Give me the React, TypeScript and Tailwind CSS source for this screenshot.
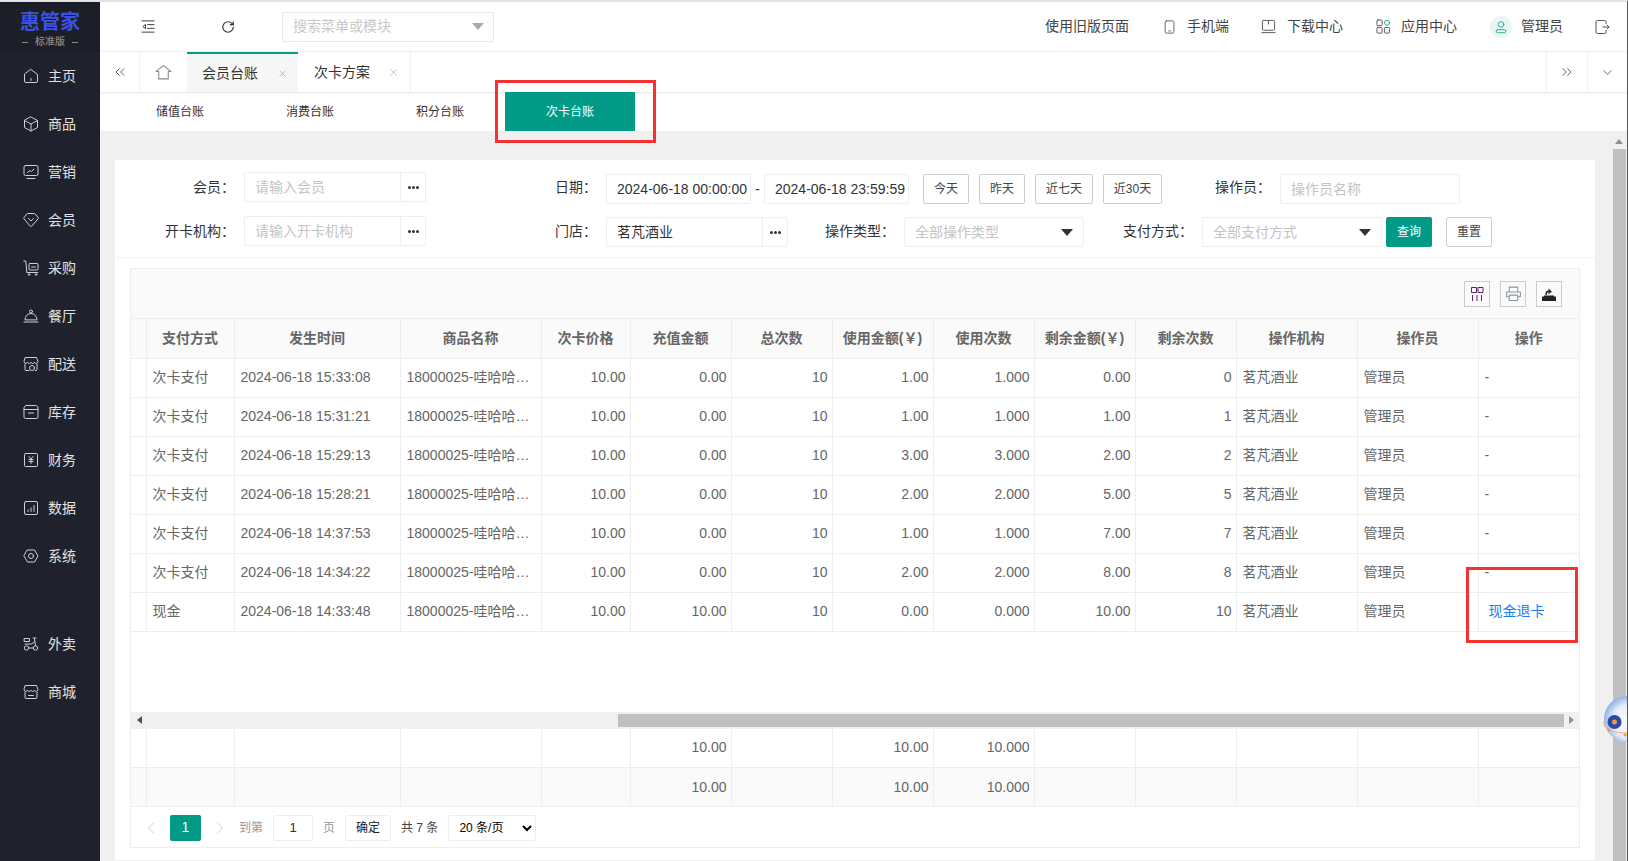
import React from "react";
import { ChevronsLeft, ChevronsRight, ChevronDown, ChevronLeft, ChevronRight, RotateCw, X } from "lucide-react";

const Ico = ({ children, size = 16, className = "" }: { children: React.ReactNode; size?: number; className?: string }) => (
  <svg width={size} height={size} viewBox="0 0 16 16" fill="none" stroke="currentColor" strokeWidth="1" strokeLinecap="round" strokeLinejoin="round" className={"shrink-0 " + className}>
    {children}
  </svg>
);

const storeTop = "M2.5 1.5h11L15 5.5c0 2-3 2.5-3.5.7C11 8 8.500 8 8 6.200 7.500 8 5 8 4.500 6.200 4 8 1 7.500 1 5.500z";

const navTop: [string, React.ReactNode][] = [
  ["主页", <path d="M8 1.500l6.500 5V13a1.500 1.500 0 0 1-1.500 1.500H3A1.500 1.500 0 0 1 1.500 13V6.500zM8 10.500v2" />],
  ["商品", <path d="M8 1l6.500 3.500v7L8 15l-6.500-3.500v-7zM1.500 4.500L8 8l6.500-3.500M8 8v7" />],
  ["营销", <><rect x="1" y="1.500" width="14" height="10" rx="1.500" /><path d="M4.500 8.500L7 6.500l1.500 1L11 5M4 14.500h8" /></>],
  ["会员", <path d="M5 1.500h6c.5 0 1 .2 1.300.6L15 5.500c.3.400.3.900 0 1.300l-6.200 7.300c-.4.500-1.200.5-1.600 0L1 6.800c-.3-.4-.3-.9 0-1.300l2.700-3.400c.3-.4.8-.6 1.300-.6zM5.500 6.500L8 9l2.500-2.500" />],
  ["采购", <><path d="M.8 1h2l1 11.500h11" /><rect x="6" y="3.500" width="9" height="6.500" rx="1" /><path d="M8.500 7h4" /><circle cx="6" cy="14.500" r=".8" /><circle cx="13" cy="14.500" r=".8" /></>],
  ["餐厅", <><path d="M2 11.500a6 6 0 0 1 12 0z" /><circle cx="8" cy="3.500" r="1.500" /><path d="M1 14h14" /></>],
  ["配送", <><path d={storeTop} /><path d="M2 8v5.500a1 1 0 0 0 1 1h3M14 8v5.500a1 1 0 0 1-1 1h-1" /><circle cx="9" cy="12" r="2.500" /></>],
  ["库存", <><path d="M3.500 1.500h9c1.400 0 2.500 1.100 2.500 2.500v9a1.500 1.500 0 0 1-1.500 1.500h-11A1.500 1.500 0 0 1 1 13V4c0-1.400 1.100-2.500 2.500-2.500zM1 5.500h14M5.500 9h5" /></>],
  ["财务", <><rect x="1.500" y="1.500" width="13" height="13" rx="1" /><path d="M6 4.500l2 2.500 2-2.500M8 7v4.500M6 7.500h4M6 9.500h4" /></>],
  ["数据", <><rect x="1.500" y="1.500" width="13" height="13" rx="1.500" /><path d="M5 11.500V10M8 11.500V8M11 11.500V5.500" /></>],
  ["系统", <><path d="M4.500 2h7L15 8l-3.500 6h-7L1 8z" /><circle cx="8" cy="8" r="2.500" /></>],
];
const navBottom: [string, React.ReactNode][] = [
  ["外卖", <><circle cx="3.500" cy="12" r="2.200" /><circle cx="12.500" cy="12" r="2.200" /><path d="M1.500 2.500h5v3h-5zM10 2h3M11.500 2.500l1 7.300M2 8h6.500l3-2M5.700 12h4.600" /></>],
  ["商城", <><path d={storeTop} /><path d="M2 8v5.500a1 1 0 0 0 1 1h10a1 1 0 0 0 1-1V8M5.500 11.500h5" /></>],
];

const NavItem = ({ label, icon }: { label: string; icon: React.ReactNode }) => (
  <div className="h-[48px] flex items-center pl-[23px] gap-[9px] text-[14px] text-[#e2e2e2]">
    <Ico className="text-[#d0d0d0]">{icon}</Ico>
    <span>{label}</span>
  </div>
);

const Sidebar = () => (
  <aside className="w-[100px] shrink-0 bg-[#1f222c] flex flex-col">
    <div className="h-[50px] shrink-0 bg-[#1c1f28] flex flex-col items-center pt-[8px]">
      <div className="text-[20px] leading-[25px] font-bold text-[#3a52e0]">惠管家</div>
      <div className="flex items-center gap-[7px] mt-[1px] text-[10px] leading-[12px] font-medium text-[#8a8a8a]">
        <span className="w-[6px] h-px bg-[#8a8a8a]" />
        <span>标准版</span>
        <span className="w-[6px] h-px bg-[#8a8a8a]" />
      </div>
    </div>
    {navTop.map(([l, i]) => <NavItem key={l} label={l} icon={i} />)}
    <div className="h-[40px] shrink-0" />
    {navBottom.map(([l, i]) => <NavItem key={l} label={l} icon={i} />)}
  </aside>
);

const Tri = ({ className }: { className: string }) => (
  <svg width="12" height="7" viewBox="0 0 12 7" className={"shrink-0 " + className}><path d="M0 0h12L6 7z" fill="currentColor" /></svg>
);

const Header = () => (
  <header className="h-[50px] shrink-0 border-b border-[#f0f0f0] flex items-center text-[14px] text-[#444]">
    <Ico size={15} className="ml-[41px] text-[#333]"><path d="M1 2h13M7 6h7M7 10h7M1 14h13M4.500 6L2 8l2.500 2z" /></Ico>
    <RotateCw size={14} strokeWidth={2} className="ml-[65px] text-[#333]" />
    <div className="ml-[47px] w-[212px] h-[30px] border border-[#e8e8e8] rounded-[2px] flex items-center justify-between pl-[10px] pr-[9px] text-[#c8c8c8]">
      <span>搜索菜单或模块</span>
      <Tri className="text-[#aaa]" />
    </div>
    <div className="ml-auto flex items-center">
      <span className="mr-[34px]">使用旧版页面</span>
      <Ico size={14} className="mr-[10px] text-[#555]"><rect x="2.500" y="1" width="10" height="14" rx="1.500" /><path d="M6.500 12.500h2" /></Ico>
      <span className="mr-[32px]">手机端</span>
      <Ico size={15} className="mr-[11px] text-[#555]"><rect x="1.500" y="1.500" width="13" height="10.500" rx="1" /><path d="M8 1.500v4M1 14.500h14" /></Ico>
      <span className="mr-[33px]">下载中心</span>
      <Ico size={15} className="mr-[10px] text-[#555]"><rect x="1" y="1" width="5.500" height="6" rx="1" /><rect x="1" y="9" width="5.500" height="6" rx="1" /><rect x="9" y="9" width="5.500" height="6" rx="1" /><circle cx="11.800" cy="4" r="2.700" className="text-[#1aa595]" /></Ico>
      <span className="mr-[33px]">应用中心</span>
      <div className="w-[22px] h-[22px] rounded-full bg-[#e9f6f3] flex items-center justify-center mr-[9px]">
        <Ico size={14} className="text-[#1aa595]"><circle cx="8" cy="5" r="3.200" /><rect x="2.500" y="11" width="11" height="3.500" rx="1.700" /></Ico>
      </div>
      <span className="mr-[31px]">管理员</span>
      <Ico size={16} className="mr-[17px] text-[#555]"><path d="M12 4.500V3a1.500 1.500 0 0 0-1.500-1.500h-7A1.500 1.500 0 0 0 2 3v10a1.500 1.500 0 0 0 1.500 1.500h7A1.500 1.500 0 0 0 12 13v-1.500M9 8h6M13 6l2 2-2 2" /></Ico>
    </div>
  </header>
);

const TabBar = () => (
  <div className="h-[41px] shrink-0 border-b border-[#ececec] shadow-[0_1px_2px_rgba(0,0,0,0.04)] flex text-[14px] text-[#333]">
    <div className="w-[40px] border-r border-[#f2f2f2] flex items-center pl-[12px]"><ChevronsLeft size={16} strokeWidth={1.25} className="text-[#444]" /></div>
    <div className="w-[47px] flex items-center justify-center">
      <Ico size={17} className="text-[#888]"><path d="M8 1.500L15 7h-2.500v7h-9V7H1z" /></Ico>
    </div>
    <div className="w-[111px] bg-[#f6f6f6] border-t-2 border-[#009a87] flex items-center pl-[15px]">
      <span>会员台账</span>
      <X size={11} strokeWidth={1.25} className="ml-[19px] text-[#999]" />
    </div>
    <div className="w-[113px] border-r border-[#f0f0f0] flex items-center pl-[16px]">
      <span>次卡方案</span>
      <X size={11} strokeWidth={1.25} className="ml-[18px] text-[#999]" />
    </div>
    <div className="ml-auto w-[41px] border-l border-[#f0f0f0] flex items-center justify-center"><ChevronsRight size={16} strokeWidth={1.25} className="text-[#444]" /></div>
    <div className="w-[40px] border-l border-[#f0f0f0] flex items-center justify-center"><ChevronDown size={15} strokeWidth={1.25} className="text-[#444]" /></div>
  </div>
);

const SubTabs = () => (
  <div className="relative h-[38px] shrink-0 pl-[15px] flex text-[12px] text-[#333]">
    {["储值台账", "消费台账", "积分台账"].map((t) => (
      <div key={t} className="w-[130px] flex items-center justify-center">{t}</div>
    ))}
    <div className="w-[130px] -mt-px bg-[#009a87] text-white flex items-center justify-center">次卡台账</div>
    <div className="absolute left-[395px] top-[-13px] w-[161px] h-[63px] border-[3px] border-[#f33333] pointer-events-none" />
  </div>
);

const field = "h-[30px] border border-[#eeeeee] rounded-[2px] bg-white text-[14px] outline-none";

const Label = ({ w, children }: { w: string; children: string }) => (
  <div className={w + " h-[30px] shrink-0 flex items-center justify-end mr-[9px] text-[14px] text-[#333]"}>{children}</div>
);

const Picker = ({ ph, value, w, className = "" }: { ph?: string; value?: string; w: string; className?: string }) => (
  <div className={field + " " + w + " shrink-0 flex " + className}>
    <input readOnly placeholder={ph} value={value ?? ""} className="min-w-0 flex-1 px-[10px] text-[14px] text-[#333] placeholder:text-[#c4c4c4] outline-none bg-transparent" />
    <div className="w-[25px] border-l border-[#eeeeee] flex items-center justify-center gap-[1px]">
      <span className="w-[3px] h-[3px] rounded-full bg-[#333]" />
      <span className="w-[3px] h-[3px] rounded-full bg-[#333]" />
      <span className="w-[3px] h-[3px] rounded-full bg-[#333]" />
    </div>
  </div>
);

const Drop = ({ text }: { text: string }) => (
  <div className={field + " w-[180px] shrink-0 mt-px flex items-center justify-between pl-[10px] pr-[10px] text-[#c4c4c4]"}>
    <span>{text}</span>
    <Tri className="text-[#333]" />
  </div>
);

const Btn = ({ w, children, className = "" }: { w: string; children: string; className?: string }) => (
  <div className={w + " h-[30px] shrink-0 border border-[#cccccc] rounded-[2px] flex items-center justify-center text-[12px] text-[#444] " + className}>{children}</div>
);

const Filters = () => (
  <div className="h-[98px] shrink-0 border-b border-[#f2f2f2] pt-[12px]">
    <div className="h-[44px] flex items-start">
      <Label w="w-[120px]">会员：</Label>
      <Picker ph="请输入会员" w="w-[182px]" />
      <div className="w-[51px] shrink-0" />
      <Label w="w-[120px]">日期：</Label>
      <div className="flex items-center mt-[2px]">
        <input readOnly value="2024-06-18 00:00:00" className={field + " w-[145px] pl-[10px] text-[#333]"} />
        <span className="w-[13px] text-center text-[14px] text-[#333]">-</span>
        <input readOnly value="2024-06-18 23:59:59" className={field + " w-[145px] pl-[10px] text-[#333]"} />
        <Btn w="w-[46px]" className="ml-[14px]">今天</Btn>
        <Btn w="w-[46px]" className="ml-[10px]">昨天</Btn>
        <Btn w="w-[58px]" className="ml-[10px]">近七天</Btn>
        <Btn w="w-[59px]" className="ml-[10px]">近30天</Btn>
      </div>
      <Label w="w-[109px]">操作员：</Label>
      <input readOnly placeholder="操作员名称" className={field + " w-[180px] mt-[2px] px-[10px] placeholder:text-[#c4c4c4]"} />
    </div>
    <div className="flex items-start">
      <Label w="w-[120px]">开卡机构：</Label>
      <Picker ph="请输入开卡机构" w="w-[182px]" />
      <div className="w-[51px] shrink-0" />
      <Label w="w-[120px]">门店：</Label>
      <Picker value="茗芃酒业" w="w-[182px]" className="mt-px" />
      <div className="w-[37px] shrink-0" />
      <Label w="w-[70px]">操作类型：</Label>
      <Drop text="全部操作类型" />
      <div className="w-[39px] shrink-0" />
      <Label w="w-[70px]">支付方式：</Label>
      <Drop text="全部支付方式" />
      <div className="w-[46px] h-[30px] mt-px ml-[4px] bg-[#009a87] rounded-[2px] text-white text-[12px] flex items-center justify-center">查询</div>
      <Btn w="w-[46px]" className="ml-[14px] mt-px">重置</Btn>
    </div>
  </div>
);

const widths = [15, 88, 166, 141, 89, 101, 101, 101, 101, 101, 101, 121, 121, 101];
const heads = ["", "支付方式", "发生时间", "商品名称", "次卡价格", "充值金额", "总次数", "使用金额(￥)", "使用次数", "剩余金额(￥)", "剩余次数", "操作机构", "操作员", "操作"];
const rows: string[][] = [
  ["次卡支付", "2024-06-18 15:33:08", "0.00", "1.00", "1.000", "0.00", "0"],
  ["次卡支付", "2024-06-18 15:31:21", "0.00", "1.00", "1.000", "1.00", "1"],
  ["次卡支付", "2024-06-18 15:29:13", "0.00", "3.00", "3.000", "2.00", "2"],
  ["次卡支付", "2024-06-18 15:28:21", "0.00", "2.00", "2.000", "5.00", "5"],
  ["次卡支付", "2024-06-18 14:37:53", "0.00", "1.00", "1.000", "7.00", "7"],
  ["次卡支付", "2024-06-18 14:34:22", "0.00", "2.00", "2.000", "8.00", "8"],
  ["现金", "2024-06-18 14:33:48", "10.00", "0.00", "0.000", "10.00", "10"],
];

const tdL = "border-r border-b border-[#eeeeee] pl-[6px] pr-[4px] text-left whitespace-nowrap overflow-hidden text-ellipsis";
const tdR = "border-r border-b border-[#eeeeee] pl-[6px] pr-[4px] text-right whitespace-nowrap";
const tdLast = "border-b border-[#eeeeee] pl-[6px] pr-[4px] text-left whitespace-nowrap";

const Cols = () => (
  <colgroup>
    {widths.map((w, i) => <col key={i} style={{ width: w }} />)}
  </colgroup>
);

const MainTable = () => (
  <table className="table-fixed border-collapse w-[1448px] text-[14px] text-[#666]">
    <Cols />
    <thead>
      <tr className="h-[39px] bg-[#fafafa]">
        {heads.map((h, i) => (
          <th key={i} className={(i === 13 ? "border-b" : "border-r border-b") + " border-[#eeeeee] font-semibold text-center text-[#666]"}>{h}</th>
        ))}
      </tr>
    </thead>
    <tbody>
      {rows.map((r, idx) => (
        <tr key={idx} className="h-[39px]">
          <td className={tdL} />
          <td className={tdL}>{r[0]}</td>
          <td className={tdL}>{r[1]}</td>
          <td className={tdL}>18000025-哇哈哈…</td>
          <td className={tdR}>10.00</td>
          <td className={tdR}>{r[2]}</td>
          <td className={tdR}>10</td>
          <td className={tdR}>{r[3]}</td>
          <td className={tdR}>{r[4]}</td>
          <td className={tdR}>{r[5]}</td>
          <td className={tdR}>{r[6]}</td>
          <td className={tdL}>茗芃酒业</td>
          <td className={tdL}>管理员</td>
          <td className={tdLast}>
            {idx === 6 ? <span className="ml-[4px] text-[#1a7cf2]">现金退卡</span> : "-"}
          </td>
        </tr>
      ))}
    </tbody>
  </table>
);

const FootTable = () => (
  <table className="table-fixed border-collapse w-[1448px] text-[14px] text-[#666]">
    <Cols />
    <tbody>
      {["h-[39px] bg-white", "h-[39px] bg-[#fafafa]"].map((c) => (
        <tr key={c} className={c}>
          {widths.map((_, i) => (
            <td key={i} className={i === 13 ? "border-b border-[#eeeeee]" : tdR}>
              {i === 5 || i === 7 ? "10.00" : i === 8 ? "10.000" : ""}
            </td>
          ))}
        </tr>
      ))}
    </tbody>
  </table>
);

const HScroll = () => (
  <div className="h-[17px] bg-[#f0f0f0] flex items-center">
    <div className="w-[16px] flex justify-center"><svg width="5" height="8" viewBox="0 0 5 8"><path d="M5 0v8L0 4z" fill="#505050" /></svg></div>
    <div className="w-[471px]" />
    <div className="w-[946px] h-[13px] bg-[#c0c0c0]" />
    <div className="flex-1 flex justify-center"><svg width="5" height="8" viewBox="0 0 5 8"><path d="M0 0v8l5-4z" fill="#909090" /></svg></div>
  </div>
);

const Pager = () => (
  <div className="h-[40px] pt-px flex items-center text-[12px] text-[#999]">
    <ChevronLeft size={20} strokeWidth={1} className="ml-[10px] text-[#c8c8c8]" />
    <div className="ml-[9px] w-[31px] h-[26px] bg-[#009a87] rounded-[2px] text-white text-[14px] flex items-center justify-center">1</div>
    <ChevronRight size={20} strokeWidth={1} className="ml-[9px] text-[#c8c8c8]" />
    <span className="ml-[9px]">到第</span>
    <input readOnly value="1" className="ml-[10px] w-[40px] h-[26px] border border-[#eeeeee] rounded-[2px] text-center text-[13px] text-[#333] outline-none" />
    <span className="ml-[10px]">页</span>
    <div className="ml-[10px] w-[46px] h-[26px] border border-[#eeeeee] rounded-[2px] text-[#222] flex items-center justify-center">确定</div>
    <span className="ml-[10px] text-[#444]">共 7 条</span>
    <select className="ml-[10px] w-[88px] h-[26px] border border-[#eeeeee] rounded-[2px] text-black text-[12px] pl-[6px]">
      <option>20 条/页</option>
    </select>
  </div>
);

const Orb = () => (
  <svg width="24" height="56" viewBox="0 0 24 56" className="absolute right-0 top-[691px] pointer-events-none">
    <defs>
      <radialGradient id="orbG" cx="0.55" cy="0.55" r="0.6">
        <stop offset="0" stopColor="#ffffff" />
        <stop offset="0.6" stopColor="#e6eefb" />
        <stop offset="1" stopColor="#7fa6e6" />
      </radialGradient>
    </defs>
    <circle cx="24" cy="26" r="23" fill="url(#orbG)" />
    <circle cx="11.500" cy="29" r="7" fill="#2b49a8" />
    <circle cx="11.500" cy="29" r="2.500" fill="#f59a3c" />
    <path d="M1 28c-2 8 10 12 23 12" fill="none" stroke="#f7a95c" strokeWidth="1" />
    <circle cx="6" cy="37" r="1.500" fill="#f59a3c" />
    <circle cx="22" cy="42" r="1.500" fill="#f59a3c" />
  </svg>
);

const ToolBtn = ({ children }: { children: React.ReactNode }) => (
  <div className="w-[26px] h-[26px] border border-[#cccccc] flex items-center justify-center">{children}</div>
);

export default function App() {
  return (
    <div className="relative w-[1628px] h-[861px] overflow-hidden bg-white border-t-2 border-t-[#e3e3e3] border-r border-r-[#555] flex [font-family:'Liberation_Sans','Noto_Sans_CJK_SC',sans-serif]">
      <Sidebar />
      <main className="flex-1 min-w-0 flex flex-col">
        <Header />
        <TabBar />
        <SubTabs />
        <div className="flex-1 min-h-0 flex bg-[#f0f0f0]">
          <div className="flex-1 min-w-0 pl-[15px] pr-[16px] pt-[29px]">
            <div className="relative h-[700px] bg-white flex flex-col">
              <Filters />
              <div className="mx-[15px] mt-[10px] border border-[#eeeeee] flex flex-col">
                <div className="h-[50px] bg-[#fafafa] border-b border-[#eeeeee] flex items-center justify-end gap-[10px] pr-[17px]">
                  <ToolBtn>
                    <svg width="16" height="16" viewBox="0 0 16 16" fill="none" stroke="#5a1f6e" strokeWidth="1"><path d="M2.500 1.500h5v5h-5zM9 1.500h5v5H9zM3.500 9v6M8 9v6M12.500 9v6" /></svg>
                  </ToolBtn>
                  <ToolBtn>
                    <Ico size={17} className="text-[#8a94a3]"><path d="M4 6V2h8v4M4 11H1.500V6.500h13V11H12" /><rect x="4" y="9.500" width="8" height="5" /></Ico>
                  </ToolBtn>
                  <ToolBtn>
                    <svg width="16" height="16" viewBox="0 0 16 16"><path d="M3 9.500h10v1h2v4.500H1v-4.500h2z" fill="#222" /><path d="M4.500 9V7c0-1.500 1-2.500 3-2.500V2.500l3.500 3-3.500 3V6.500c-1 0-1.500.5-1.500 1.500v1z" fill="#333" /></svg>
                  </ToolBtn>
                </div>
                <MainTable />
                <div className="h-[80px]" />
                <HScroll />
                <FootTable />
                <Pager />
              </div>
              <div className="absolute left-[1351px] top-[407px] w-[112px] h-[76px] border-[3px] border-[#f33333] pointer-events-none" />
            </div>
          </div>
          <div className="w-[16px] shrink-0 flex flex-col items-center">
            <svg width="8" height="5" viewBox="0 0 8 5" className="mt-[8px] mb-[5px]"><path d="M0 5h8L4 0z" fill="#909090" /></svg>
            <div className="flex-1 w-[13px] bg-[#c0c0c0]" />
          </div>
        </div>
      </main>
      <Orb />
    </div>
  );
}
